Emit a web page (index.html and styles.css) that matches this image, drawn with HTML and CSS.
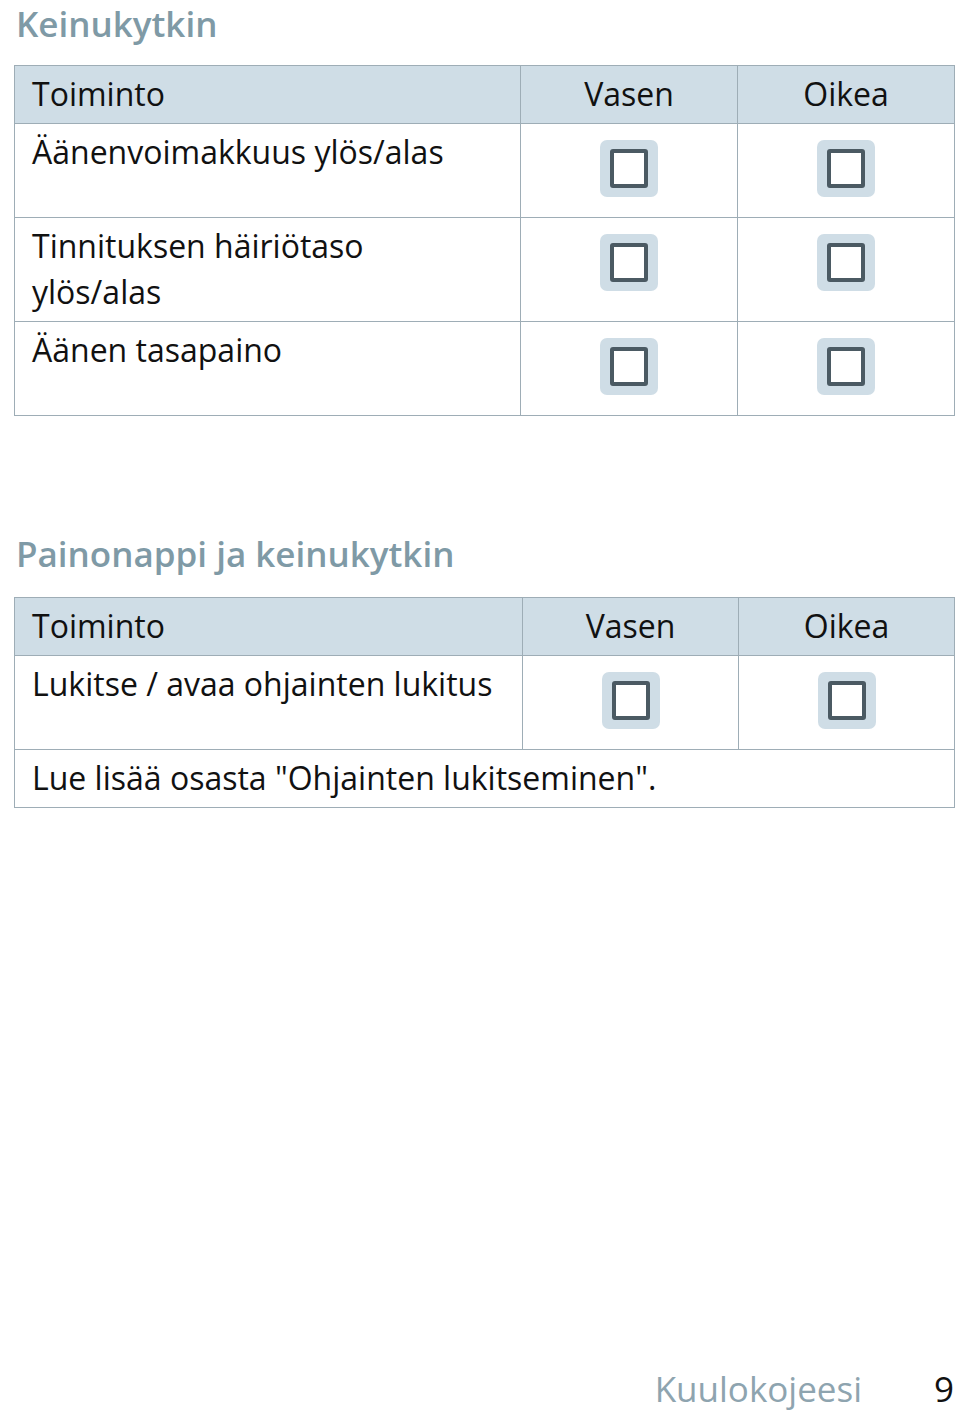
FILE: index.html
```html
<!DOCTYPE html>
<html lang="fi">
<head>
<meta charset="utf-8">
<title>Keinukytkin</title>
<link rel="stylesheet" href="styles.css">
</head>
<body>
<div class="page">
  <h2 class="heading">Keinukytkin</h2>
  <table class="grid grid-a">
    <colgroup><col class="c-func"><col class="c-side"><col class="c-side"></colgroup>
    <thead>
      <tr><th class="func">Toiminto</th><th class="side">Vasen</th><th class="side">Oikea</th></tr>
    </thead>
    <tbody>
      <tr>
        <td class="func">Äänenvoimakkuus ylös/alas</td>
        <td class="box"><span class="check"><span class="check-inner"></span></span></td>
        <td class="box"><span class="check"><span class="check-inner"></span></span></td>
      </tr>
      <tr>
        <td class="func">Tinnituksen häiriötaso<br>ylös/alas</td>
        <td class="box"><span class="check"><span class="check-inner"></span></span></td>
        <td class="box"><span class="check"><span class="check-inner"></span></span></td>
      </tr>
      <tr>
        <td class="func">Äänen tasapaino</td>
        <td class="box"><span class="check"><span class="check-inner"></span></span></td>
        <td class="box"><span class="check"><span class="check-inner"></span></span></td>
      </tr>
    </tbody>
  </table>

  <h2 class="heading heading-second">Painonappi ja keinukytkin</h2>
  <table class="grid grid-b">
    <colgroup><col class="c-func-b"><col class="c-side-b"><col class="c-side-b"></colgroup>
    <thead>
      <tr><th class="func">Toiminto</th><th class="side">Vasen</th><th class="side">Oikea</th></tr>
    </thead>
    <tbody>
      <tr>
        <td class="func">Lukitse / avaa ohjainten lukitus</td>
        <td class="box"><span class="check"><span class="check-inner"></span></span></td>
        <td class="box"><span class="check"><span class="check-inner"></span></span></td>
      </tr>
      <tr>
        <td class="func note" colspan="3">Lue lisää osasta "Ohjainten lukitseminen".</td>
      </tr>
    </tbody>
  </table>

  <footer class="footer">
    <span class="footer-title">Kuulokojeesi</span>
    <span class="footer-num">9</span>
  </footer>
</div>
</body>
</html>
```

FILE: styles.css
```css
html, body {
  margin: 0;
  padding: 0;
  background: #ffffff;
}

body {
  font-family: "Open Sans", "Noto Sans", "Liberation Sans", sans-serif;
  color: #111111;
}

.page {
  box-sizing: border-box;
  width: 960px;
  min-height: 1415px;
  padding: 0 6px 3px 14px;
  display: flex;
  flex-direction: column;
}

.heading {
  margin: 0 0 17px 2px;
  font-size: 35px;
  line-height: 48px;
  font-weight: 600;
  color: #7f9aa6;
}

.heading-second {
  margin-top: 114px;
  margin-bottom: 19px;
}

.grid {
  width: 940px;
  border-collapse: collapse;
  table-layout: fixed;
  border: 1.5px solid #9eadb6;
}

.c-func { width: 506px; }
.c-side { width: 217px; }
.c-func-b { width: 508px; }
.c-side-b { width: 216px; }

.grid th,
.grid td {
  border: 1px solid #9eadb6;
  font-size: 32px;
  line-height: 46px;
  font-weight: 400;
  vertical-align: top;
  padding: 5px 17px 6px 17px;
}

.grid thead th {
  background: #cfdde6;
}

.grid th.func,
.grid td.func {
  text-align: left;
}

.grid th.side {
  text-align: center;
  padding-left: 0;
  padding-right: 0;
}

.grid td.func {
  padding-top: 5px;
  padding-bottom: 6px;
}

.grid td.box {
  text-align: center;
  padding: 16px 0 20px 0;
}

.check {
  display: inline-flex;
  align-items: center;
  justify-content: center;
  width: 58px;
  height: 57px;
  border-radius: 7px;
  background: #cfdde6;
  vertical-align: top;
}

.check-inner {
  box-sizing: border-box;
  width: 38px;
  height: 39px;
  border: 4px solid #4b5a63;
  border-radius: 3px;
  background: #ffffff;
}

.grid td.note {
  padding-bottom: 6px;
}

.footer {
  margin-top: auto;
  display: flex;
  justify-content: flex-end;
  align-items: baseline;
  gap: 72px;
  font-size: 35px;
  line-height: 46px;
}

.footer-title {
  color: #8ea4af;
  font-weight: 400;
}

.footer-num {
  color: #111111;
  font-weight: 400;
}
```
